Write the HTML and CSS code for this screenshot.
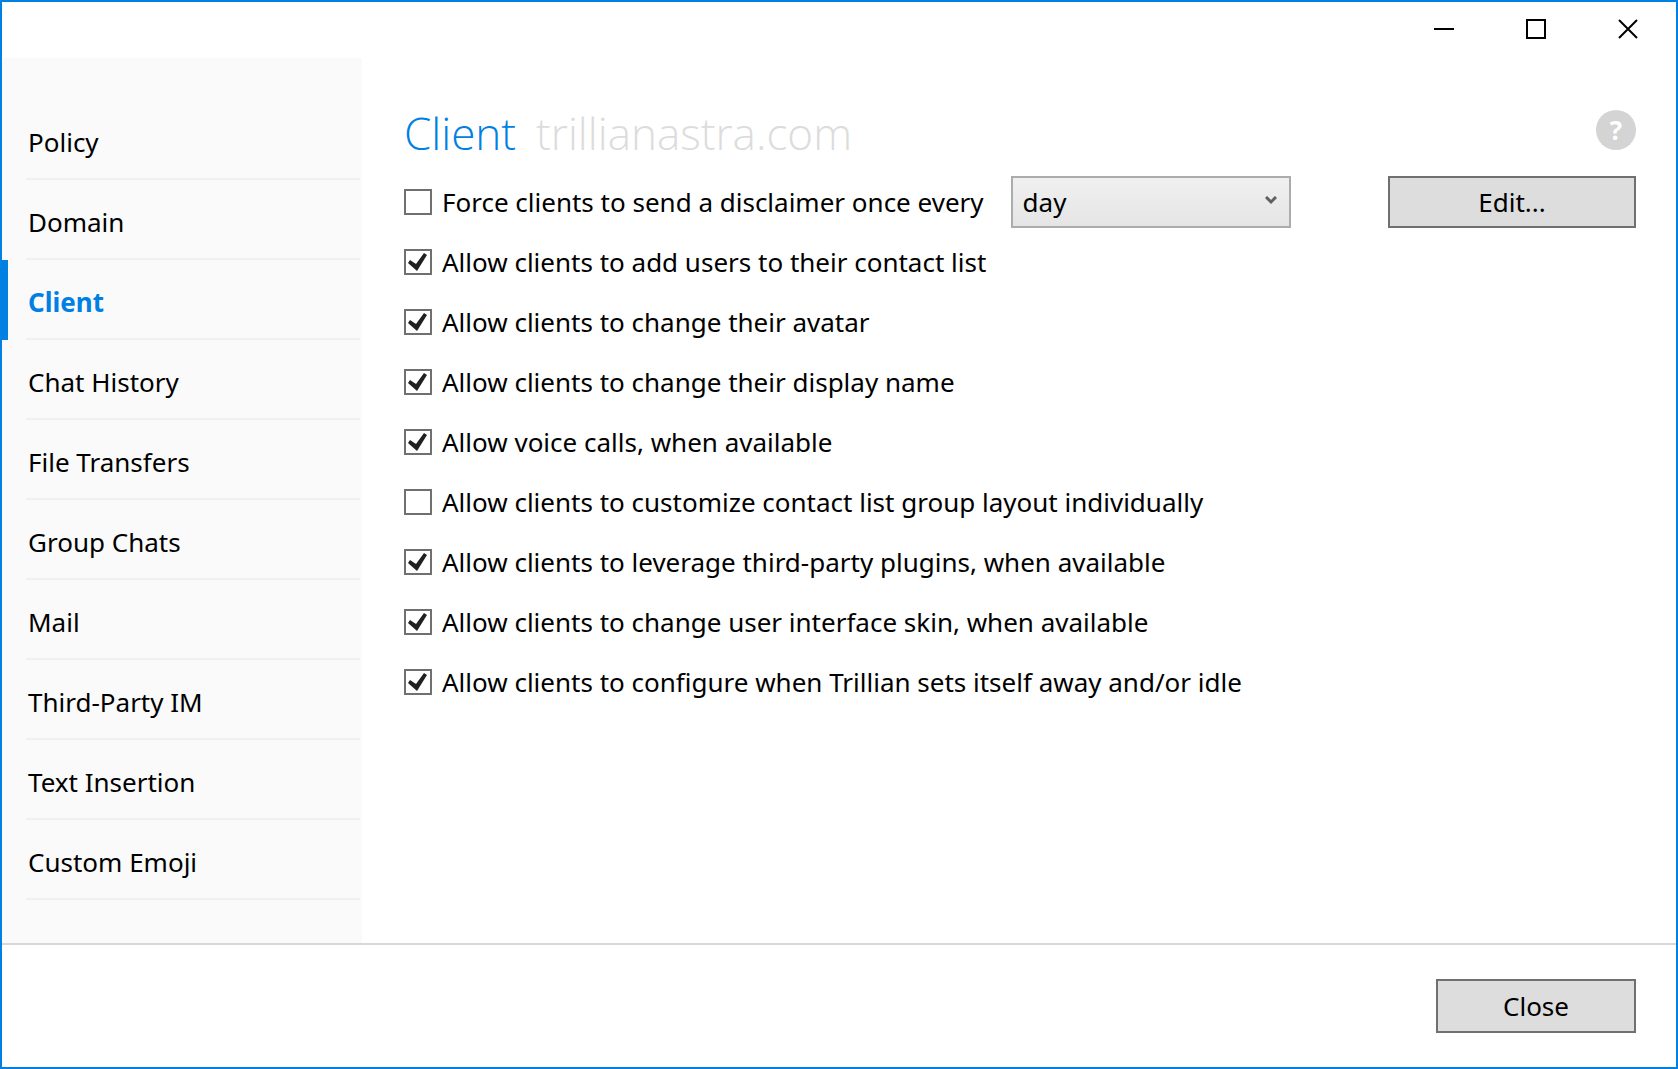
FILE: index.html
```
<!DOCTYPE html>
<html lang="en">

<head>
    <meta charset="UTF-8">
    <meta name="viewport" content="width=device-width, initial-scale=1.0">
    <title>Client - trillianastra.com</title>
    <link rel="stylesheet" href="styles.css">
</head>

<body>
    <header class="titlebar">
        <button class="window-btn" aria-label="Minimize">
            <svg width="20" height="20" viewBox="0 0 20 20"><path d="M0 10h20" /></svg>
        </button>
        <button class="window-btn" aria-label="Maximize">
            <svg width="20" height="20" viewBox="0 0 20 20"><path d="M1 1h18v18H1z" /></svg>
        </button>
        <button class="window-btn" aria-label="Close window">
            <svg width="20" height="20" viewBox="0 0 20 20"><path d="M1 1l18 18M19 1L1 19" /></svg>
        </button>
    </header>

    <div class="window-body">
        <nav class="sidebar">
            <a href="#policy">Policy</a>
            <a href="#domain">Domain</a>
            <a href="#client" class="active">Client</a>
            <a href="#chat-history">Chat History</a>
            <a href="#file-transfers">File Transfers</a>
            <a href="#group-chats">Group Chats</a>
            <a href="#mail">Mail</a>
            <a href="#third-party">Third-Party IM</a>
            <a href="#text-insertion">Text Insertion</a>
            <a href="#custom-emoji">Custom Emoji</a>
        </nav>

        <main class="content">
            <div class="heading">
                <h1>Client</h1>
                <span class="domain">trillianastra.com</span>
                <button class="help-btn" aria-label="Help">?</button>
            </div>

            <div class="option">
                <input type="checkbox" id="disclaimer">
                <label for="disclaimer">Force clients to send a disclaimer once every</label>
                <div class="select-wrap">
                    <select id="interval" aria-label="Disclaimer interval">
                        <option>day</option>
                        <option>week</option>
                        <option>month</option>
                    </select>
                    <svg class="chevron" width="12" height="10" viewBox="0 0 12 10"><path d="M1 1l5 5 5-5" /></svg>
                </div>
                <button class="btn edit-btn">Edit...</button>
            </div>
            <div class="option">
                <input type="checkbox" id="add-users" checked>
                <label for="add-users">Allow clients to add users to their contact list</label>
            </div>
            <div class="option">
                <input type="checkbox" id="avatar" checked>
                <label for="avatar">Allow clients to change their avatar</label>
            </div>
            <div class="option">
                <input type="checkbox" id="display-name" checked>
                <label for="display-name">Allow clients to change their display name</label>
            </div>
            <div class="option">
                <input type="checkbox" id="voice" checked>
                <label for="voice">Allow voice calls, when available</label>
            </div>
            <div class="option">
                <input type="checkbox" id="layout">
                <label for="layout">Allow clients to customize contact list group layout individually</label>
            </div>
            <div class="option">
                <input type="checkbox" id="plugins" checked>
                <label for="plugins">Allow clients to leverage third-party plugins, when available</label>
            </div>
            <div class="option">
                <input type="checkbox" id="skin" checked>
                <label for="skin">Allow clients to change user interface skin, when available</label>
            </div>
            <div class="option">
                <input type="checkbox" id="idle" checked>
                <label for="idle">Allow clients to configure when Trillian sets itself away and/or idle</label>
            </div>
        </main>
    </div>

    <footer class="footer">
        <button class="btn close-btn">Close</button>
    </footer>
</body>

</html>
```
FILE: styles.css
```
* {
    box-sizing: border-box;
}

body {
    display: flex;
    flex-direction: column;
    min-height: 100vh;
    margin: 0;
    border: 2px solid #0080e3;
    background-color: #fff;
    color: #000;
    font-family: "Segoe UI", "Noto Sans", sans-serif;
    font-size: 26px;
    line-height: 36px;
}

button,
select {
    font: inherit;
    color: inherit;
}

.titlebar {
    display: flex;
    justify-content: flex-end;
    height: 56px;
    padding-right: 2px;
}

.window-btn {
    display: flex;
    align-items: center;
    justify-content: center;
    width: 92px;
    height: 54px;
    padding: 0;
    border: none;
    background: none;
}

.window-btn svg {
    fill: none;
    stroke: #000;
    stroke-width: 2;
}

.window-body {
    display: flex;
    flex: 1;
}

.sidebar {
    width: 360px;
    padding: 42px 2px 42px 0;
    background-color: #fafafa;
}

.sidebar a {
    display: block;
    position: relative;
    height: 80px;
    margin-left: 24px;
    padding: 24px 0 0 2px;
    border-bottom: 2px solid #f0f0f0;
    color: #000;
    text-decoration: none;
}

.sidebar .active {
    color: #0080e3;
    font-weight: bold;
}

/* marker on the window edge, next to the current page */
.sidebar .active::before {
    content: "";
    position: absolute;
    top: 0;
    bottom: -2px;
    left: -24px;
    width: 6px;
    background-color: #0080e3;
}

.content {
    flex: 1;
    padding: 42px 40px 0 42px;
}

.heading {
    display: flex;
    align-items: baseline;
    height: 72px;
    font-family: "Segoe UI", "Open Sans", sans-serif;
    font-size: 44px;
    font-weight: 300;
    line-height: 66px;
}

.heading h1 {
    margin: 0 20px 0 0;
    color: #0080e3;
    font-size: inherit;
    font-weight: inherit;
}

.domain {
    color: #dcdcdc;
}

.help-btn {
    align-self: flex-start;
    width: 40px;
    height: 40px;
    margin: 10px 0 0 auto;
    padding: 0;
    border: none;
    border-radius: 50%;
    background-color: #d4d4d4;
    color: #fff;
    font-size: 26px;
    font-weight: bold;
    line-height: 40px;
}

.option {
    display: flex;
    align-items: center;
    height: 60px;
}

.option input {
    display: grid;
    place-items: center;
    width: 28px;
    height: 26px;
    margin: 0 10px 0 0;
    border: 2px solid #707070;
    background-color: #fff;
    appearance: none;
}

.option input:checked::before {
    content: "";
    width: 20px;
    height: 18px;
    background-color: #212121;
    clip-path: polygon(0 10px, 2px 7px, 8px 11px, 16px 0, 19px 2px, 9px 18px);
}

.select-wrap {
    position: relative;
    margin-left: 27px;
}

.select-wrap select {
    display: block;
    width: 280px;
    height: 52px;
    padding: 0 10px;
    border: 2px solid #acacac;
    border-radius: 0;
    background: linear-gradient(#f0f0f0, #e5e5e5);
    appearance: none;
}

.chevron {
    position: absolute;
    top: 20px;
    right: 14px;
    fill: none;
    stroke: #606060;
    stroke-width: 3;
    pointer-events: none;
}

.btn {
    height: 52px;
    padding: 0;
    border: 2px solid #707070;
    background-color: #ddd;
}

.edit-btn {
    width: 248px;
    margin-left: auto;
}

.footer {
    display: flex;
    justify-content: flex-end;
    padding: 34px 40px;
    border-top: 2px solid #d7d7d7;
}

.close-btn {
    width: 200px;
    height: 54px;
}
```
